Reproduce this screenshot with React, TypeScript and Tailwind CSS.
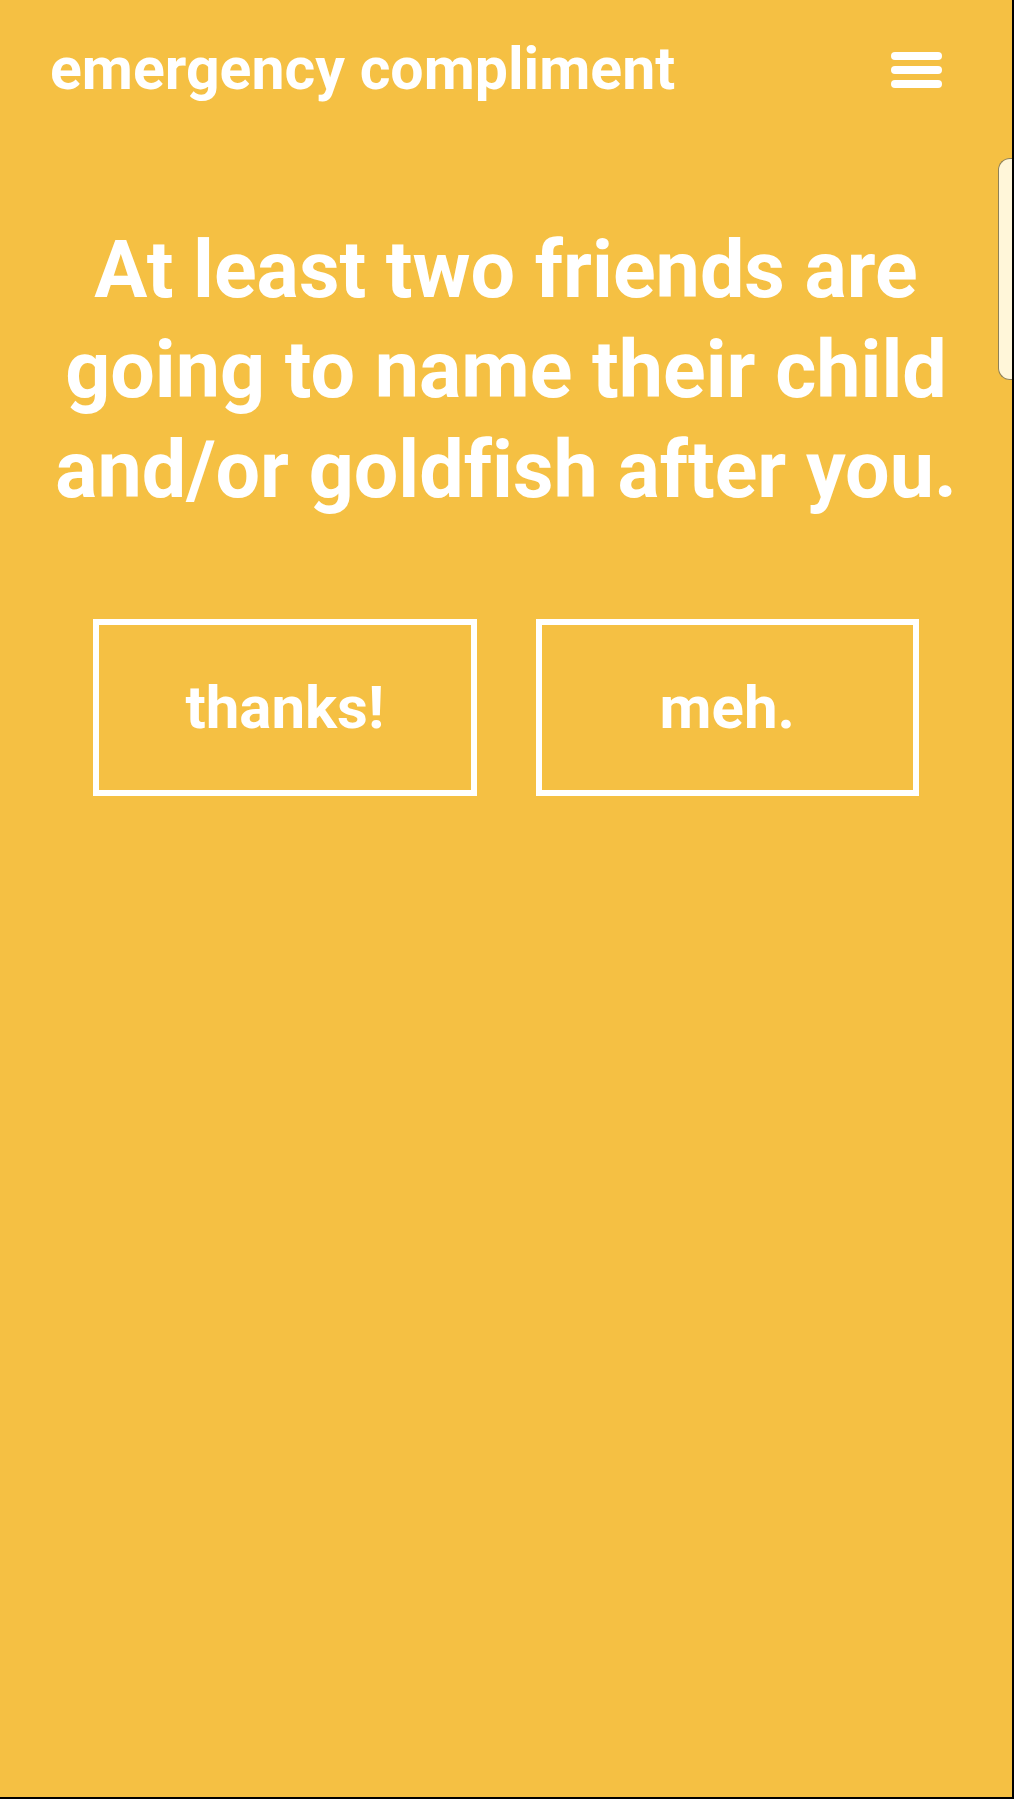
export default function App() {
  return (
    <div
      className="relative w-[1014px] h-[1799px] bg-[#f5c043] border-r-2 border-b-2 border-black text-white overflow-hidden [font-variant-ligatures:none]"
      style={{ fontFamily: "Roboto, 'Noto Sans', sans-serif" }}
    >
      {/* header */}
      <div className="flex items-start justify-between pl-[50px] pr-[70px] pt-[39px]">
        <span className="text-[59px] font-bold leading-none">
          emergency compliment
        </span>
        <button className="mt-[13px] flex flex-col gap-[6px] w-[51px]">
          <span className="block h-[8px] w-full rounded-full bg-white" />
          <span className="block h-[8px] w-full rounded-full bg-white" />
          <span className="block h-[8px] w-full rounded-full bg-white" />
        </button>
      </div>

      {/* compliment */}
      <h1 className="mt-[122px] px-[40px] text-center text-[79px] font-bold leading-[100px]">
        At least two friends are going to name their child and/or goldfish
        after you.
      </h1>

      {/* actions */}
      <div className="mt-[99px] flex gap-[59px] px-[93px]">
        <button className="flex-1 h-[177px] border-[6px] border-white flex items-center justify-center text-[60px] font-bold">
          thanks!
        </button>
        <button className="flex-1 h-[177px] border-[6px] border-white flex items-center justify-center text-[60px] font-bold">
          meh.
        </button>
      </div>

      {/* edge panel handle */}
      <div className="absolute right-0 top-[158px] h-[222px] w-[14px] rounded-l-[12px] border border-r-0 border-[#8f8157] bg-[#fff6d9]" />
    </div>
  );
}
